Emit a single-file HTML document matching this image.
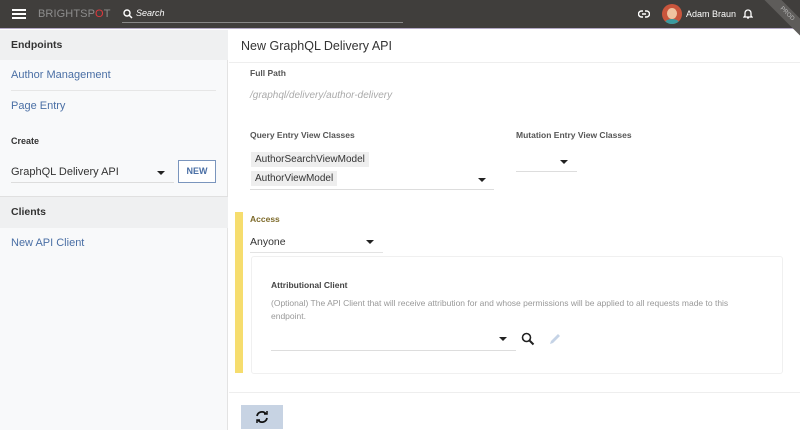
<!DOCTYPE html>
<html><head><style>
*{margin:0;padding:0;box-sizing:border-box}
body{width:800px;height:430px;overflow:hidden;font-family:"Liberation Sans",sans-serif;background:#fff;position:relative;color:#333}
.a{position:absolute}
.hdr{left:0;top:0;width:800px;height:29px;background:#403e3c;border-bottom:1px solid #b3a8c6}
.side{left:0;top:30px;width:228px;height:400px;background:#f8f9fa;border-right:1px solid #e3e3e3}
.lnk{color:#4a6fa5;font-size:11px}
.bold{font-weight:bold;font-size:10.5px;color:#333}
.lbl{font-weight:bold;font-size:8.5px;color:#555}
.tri{width:0;height:0;border-left:4px solid transparent;border-right:4px solid transparent;border-top:4px solid #222}
.line{height:1px;background:#ddd}
</style></head><body>
<div class="a hdr"></div>
<div class="a" style="left:12px;top:9px;width:14px;height:2px;background:#fff;box-shadow:0 4px 0 #fff,0 8px 0 #fff"></div>
<div class="a" style="left:38px;top:8px;font-size:11px;color:#8d8d8d;letter-spacing:.1px">BRIGHTSP<span style="color:#e0393e">O</span>T</div>
<svg class="a" style="left:123px;top:9px" width="10" height="10" viewBox="0 0 10 10"><circle cx="4" cy="4" r="3" stroke="#fff" stroke-width="1.4" fill="none"/><path d="M6 6 L9 9" stroke="#fff" stroke-width="1.5"/></svg>
<div class="a" style="left:136px;top:8px;font-size:9px;color:#fff;font-style:italic">Search</div>
<div class="a" style="left:122px;top:22px;width:281px;height:1px;background:#888"></div>
<svg class="a" style="left:638px;top:9px" width="12" height="10" viewBox="0 0 12 10"><path d="M5 2 H3.5 a2.5 2.5 0 0 0 0 6 H5 M7 2 H8.5 a2.5 2.5 0 0 1 0 6 H7 M4 5 H8" stroke="#fff" stroke-width="1.4" fill="none"/></svg>
<div class="a" style="left:662px;top:4px;width:20px;height:20px;border-radius:50%;background:#c9553c;overflow:hidden"><div class="a" style="left:5px;top:4px;width:10px;height:11px;border-radius:50%;background:#f0c3a0"></div><div class="a" style="left:3px;top:15px;width:14px;height:8px;border-radius:50%;background:#3a9aa0"></div></div>
<div class="a" style="left:686px;top:9px;font-size:9px;color:#fff">Adam Braun</div>
<svg class="a" style="left:743px;top:8px" width="10" height="12" viewBox="0 0 10 12"><path d="M2 8 V5 a3 3 0 0 1 6 0 V8 L9 9 H1 Z M4 10 h2" stroke="#fff" stroke-width="1.3" fill="none"/></svg>
<div class="a" style="left:757px;top:8px;width:60px;height:12px;background:#5e5c5a;transform:rotate(45deg);color:#bbb;font-size:6px;text-align:center;line-height:12px">PROD</div>

<div class="a side"></div>
<div class="a" style="left:0;top:30px;width:228px;height:30px;background:#eff0f1"></div>
<div class="a bold" style="left:11px;top:39px">Endpoints</div>
<div class="a lnk" style="left:11px;top:69px">Author Management</div>
<div class="a line" style="left:11px;top:90px;width:205px;background:#e6e6e6"></div>
<div class="a lnk" style="left:11px;top:100px">Page Entry</div>
<div class="a" style="left:11px;top:136px;font-size:9px;font-weight:bold">Create</div>
<div class="a" style="left:11px;top:166px;font-size:11px;color:#333">GraphQL Delivery API</div>
<div class="a tri" style="left:157px;top:171px"></div>
<div class="a line" style="left:11px;top:182px;width:163px"></div>
<div class="a" style="left:178px;top:160px;width:38px;height:23px;border:1px solid #7a95bd;background:#fff;color:#4a6fa5;font-size:9px;font-weight:bold;text-align:center;line-height:21px">NEW</div>
<div class="a" style="left:0;top:196px;width:228px;height:32px;background:#eff0f1;border-top:1px solid #e0e0e0"></div>
<div class="a bold" style="left:11px;top:206px">Clients</div>
<div class="a lnk" style="left:11px;top:237px">New API Client</div>

<div class="a" style="left:241px;top:39px;font-size:12.5px;color:#333">New GraphQL Delivery API</div>
<div class="a line" style="left:229px;top:62px;width:571px;background:#eee"></div>
<div class="a lbl" style="left:250px;top:68px">Full Path</div>
<div class="a" style="left:250px;top:90px;font-size:10px;color:#aaa;font-style:italic">/graphql/delivery/author-delivery</div>
<div class="a lbl" style="left:250px;top:130px">Query Entry View Classes</div>
<div class="a lbl" style="left:516px;top:130px">Mutation Entry View Classes</div>
<div class="a" style="left:251px;top:152px;padding:2px 4px;background:#eee;font-size:10px;color:#333">AuthorSearchViewModel</div>
<div class="a" style="left:251px;top:171px;padding:2px 4px;background:#eee;font-size:10px;color:#333">AuthorViewModel</div>
<div class="a tri" style="left:478px;top:178px"></div>
<div class="a line" style="left:250px;top:189px;width:244px"></div>
<div class="a tri" style="left:560px;top:160px"></div>
<div class="a line" style="left:516px;top:171px;width:61px"></div>

<div class="a" style="left:235px;top:212px;width:8px;height:161px;background:#f6dd6e"></div>
<div class="a lbl" style="left:250px;top:214px;color:#7d6a2a">Access</div>
<div class="a" style="left:250px;top:236px;font-size:10.5px;color:#333">Anyone</div>
<div class="a tri" style="left:366px;top:240px"></div>
<div class="a line" style="left:250px;top:252px;width:133px;background:#e3e3e3"></div>
<div class="a" style="left:251px;top:256px;width:532px;height:118px;border:1px solid #f0f0f0;border-radius:3px"></div>
<div class="a lbl" style="left:271px;top:280px;color:#444">Attributional Client</div>
<div class="a" style="left:271px;top:297px;width:480px;font-size:8.5px;color:#999;line-height:13px">(Optional) The API Client that will receive attribution for and whose permissions will be applied to all requests made to this endpoint.</div>
<div class="a tri" style="left:499px;top:337px"></div>
<div class="a line" style="left:271px;top:350px;width:245px"></div>
<svg class="a" style="left:521px;top:332px" width="14" height="14" viewBox="0 0 14 14"><circle cx="5.5" cy="5.5" r="4" stroke="#222" stroke-width="1.6" fill="none"/><path d="M8.5 8.5 L12.5 12.5" stroke="#222" stroke-width="2"/></svg>
<svg class="a" style="left:548px;top:332px" width="14" height="14" viewBox="0 0 14 14"><path d="M2 12 L3 9 L10 2 L12 4 L5 11 Z" fill="#c5d3e6"/></svg>
<div class="a line" style="left:229px;top:392px;width:571px;background:#eee"></div>
<div class="a" style="left:241px;top:405px;width:42px;height:24px;background:#c7d3e3"></div>
<svg class="a" style="left:254px;top:409px" width="16" height="16" viewBox="0 0 16 16"><path d="M3 7 A5 5 0 0 1 12 5 M13 9 A5 5 0 0 1 4 11" stroke="#111" stroke-width="1.8" fill="none"/><path d="M10 5 h3 v-3 M6 11 h-3 v3" stroke="#111" stroke-width="1.5" fill="none"/></svg>
</body></html>
